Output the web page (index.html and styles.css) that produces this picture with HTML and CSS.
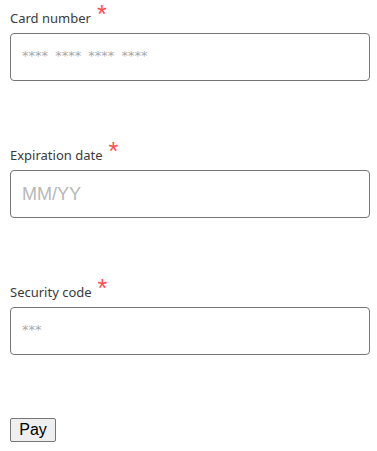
FILE: index.html
```html
<!DOCTYPE html>
<html>
<head>
<meta charset="utf-8">
<link rel="stylesheet" href="styles.css">
</head>
<body>
<form class="pay-form">
  <div class="field">
    <div class="label-row"><label class="label">Card number</label><span class="req">*</span></div>
    <input class="input input-stars" type="text" placeholder="**** **** **** ****">
  </div>
  <div class="field">
    <div class="label-row"><label class="label">Expiration date</label><span class="req">*</span></div>
    <input class="input input-date" type="text" placeholder="MM/YY">
  </div>
  <div class="field">
    <div class="label-row"><label class="label">Security code</label><span class="req">*</span></div>
    <input class="input input-stars" type="text" placeholder="***">
  </div>
  <button class="pay-btn" type="button">Pay</button>
</form>
</body>
</html>
```

FILE: styles.css
```css
html, body {
  margin: 0;
  padding: 0;
  background: #ffffff;
}
.pay-form {
  display: flex;
  flex-direction: column;
  padding: 0 7px 0 10px;
}
.field {
  display: flex;
  flex-direction: column;
  margin-bottom: 56px;
}
.label-row {
  display: flex;
  align-items: flex-start;
  height: 33px;
}
.label {
  font-family: "Noto Sans", sans-serif;
  font-size: 13px;
  line-height: 18px;
  color: #3a3a3a;
  margin-top: 9px;
}
.req {
  font-family: "Liberation Sans", sans-serif;
  font-size: 25px;
  line-height: 25px;
  color: #ff4d4f;
  margin-left: 6px;
  margin-top: 2px;
}
.input {
  box-sizing: border-box;
  width: 360px;
  height: 48px;
  margin: 0;
  border: 1px solid #767676;
  border-radius: 4px;
  padding: 0 11px;
  background: #ffffff;
  font-family: "Liberation Sans", sans-serif;
  outline: none;
}
.input-stars {
  font-family: "DejaVu Sans", sans-serif;
  font-size: 13px;
  word-spacing: 3px;
  padding-bottom: 4px;
}
.input-date {
  font-size: 18px;
}
.input-stars::placeholder {
  color: #a8a8a8;
}
.input-date::placeholder {
  color: #b8b8b8;
}
.pay-btn {
  align-self: flex-start;
  box-sizing: border-box;
  width: 46px;
  height: 24px;
  margin-top: 7px;
  padding: 0;
  font-family: "Liberation Sans", sans-serif;
  font-size: 16px;
  color: #000000;
  background: #efefef;
  border: 1px solid #767676;
  border-radius: 2px;
}
```
